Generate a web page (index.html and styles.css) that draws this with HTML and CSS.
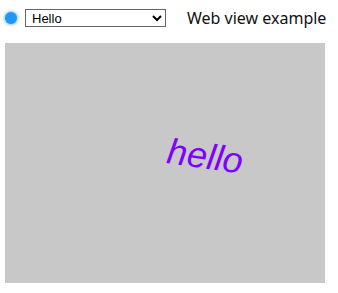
FILE: index.html
```html
<!DOCTYPE html>
<html>
<head>
<meta charset="utf-8">
<link rel="stylesheet" href="styles.css">
</head>
<body>
<div class="toolbar">
  <span class="dot"></span>
  <select class="picker"><option>Hello</option></select>
  <span class="title">Web view example</span>
</div>
<div class="view">
  <span class="word">hello</span>
</div>
</body>
</html>
```
FILE: styles.css
```css
html, body { margin: 0; padding: 0; background: #fff; }
body { padding: 8px 5px; }
.toolbar {
  display: flex;
  align-items: center;
  height: 18px;
  margin-top: 1px;
}
.dot {
  width: 12px; height: 12px; border-radius: 50%;
  background: #2196f3;
  box-shadow: 0 0 3px 1px rgba(33,150,243,0.55);
  margin-left: 0;
}
.picker {
  margin-left: 8px;
  width: 141px; height: 18px;
  font: 13px "Liberation Sans", Arial, sans-serif;
  border: 1px solid #666;
  border-radius: 0;
  background: #fff;
  padding: 0 2px;
}
.title {
  margin-left: 21px;
  font: 16px "Noto Sans", sans-serif;
  color: #111;
}
.view {
  position: relative;
  width: 320px; height: 240px;
  margin-top: 16px;
  background: #c8c8c8;
}
.word {
  position: absolute;
  left: 160px; top: 90px;
  font: italic 36px "Liberation Sans", Arial, sans-serif;
  color: #8000ff;
  transform: rotate(8deg);
  transform-origin: left bottom;
  line-height: 1;
}
```
